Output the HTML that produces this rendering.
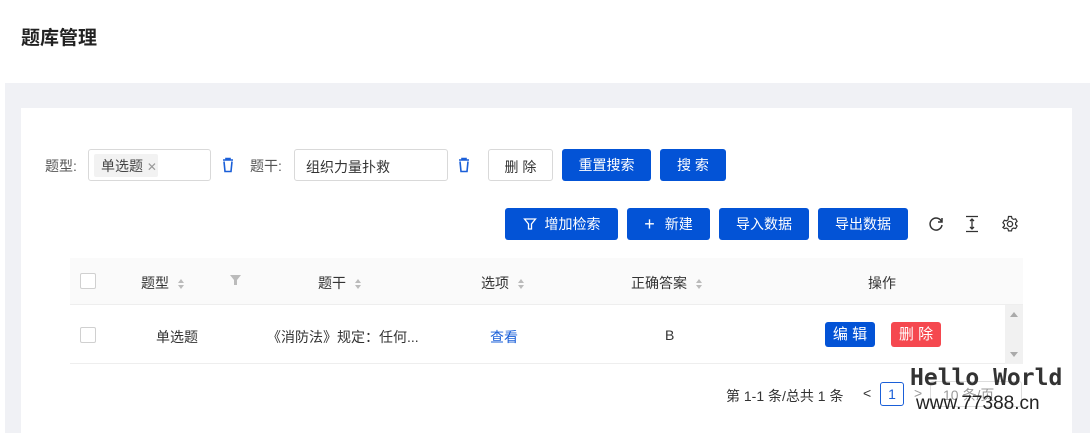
<!DOCTYPE html>
<html><head><meta charset="utf-8"><style>
*{box-sizing:border-box;margin:0;padding:0}
body{width:1090px;height:433px;overflow:hidden;background:#fff;font-family:"Liberation Sans","Noto Sans CJK SC",sans-serif;font-size:14px;color:#333;position:relative}
.a{position:absolute}
.gray{left:5px;top:83px;width:1085px;height:350px;background:#f0f1f5}
.card{left:21px;top:108px;width:1051px;height:325px;background:#fff}
.inp{border:1px solid #d9d9d9;border-radius:3px;height:32px;background:#fff}
.btn{background:#0353d6;color:#fff;border-radius:3px;height:32px;display:flex;align-items:center;justify-content:center;font-size:14px}
.hd{top:258px;left:70px;width:953px;height:47px;background:#fafafa;border-bottom:1px solid #eee}
.cb{width:16px;height:16px;border:1px solid #d0d0d0;border-radius:2px;background:#fff}
.sort{display:inline-block;width:8px;vertical-align:middle;margin-left:8px}
.txt{font-size:14px;color:#333;white-space:nowrap}
</style></head><body>
<div class="a txt" style="left:21px;top:23px;font-size:19px;font-weight:bold;color:#222">题库管理</div>
<div class="a gray"></div>
<div class="a card"></div>

<div class="a txt" style="left:45px;top:156px;color:#555">题型:</div>
<div class="a inp" style="left:88px;top:149px;width:123px"></div>
<div class="a" style="left:94px;top:154px;width:64px;height:23px;background:#f2f2f2;border-radius:2px;font-size:14px;padding:2px 0 0 7px;color:#444">单选题 <span style="color:#999;font-size:12px">✕</span></div>
<svg class="a" style="left:221px;top:157px" width="14" height="16" viewBox="0 0 14 16"><path d="M2 3h10M5 3V1.5h4V3M3 4.5l1 10h6l1-10" fill="none" stroke="#1a5fd8" stroke-width="1.6"/></svg>
<div class="a txt" style="left:250px;top:156px;color:#555">题干:</div>
<div class="a inp" style="left:294px;top:149px;width:154px;padding:7px 11px" ><span class="txt">组织力量扑救</span></div>
<svg class="a" style="left:457px;top:157px" width="14" height="16" viewBox="0 0 14 16"><path d="M2 3h10M5 3V1.5h4V3M3 4.5l1 10h6l1-10" fill="none" stroke="#1a5fd8" stroke-width="1.6"/></svg>
<div class="a inp" style="left:488px;top:149px;width:65px;text-align:center;padding-top:7px"><span class="txt">删 除</span></div>
<div class="a btn" style="left:562px;top:149px;width:89px">重置搜索</div>
<div class="a btn" style="left:660px;top:149px;width:66px">搜 索</div>

<div class="a btn" style="left:505px;top:208px;width:113px"><svg width="14" height="14" viewBox="0 0 14 14" style="margin-right:8px"><path d="M1.5 2h11l-4 5v5h-3V7z" fill="none" stroke="#fff" stroke-width="1.3"/></svg>增加检索</div>
<div class="a btn" style="left:627px;top:208px;width:83px"><span style="font-size:18px;font-weight:300;margin-right:10px">+</span>新建</div>
<div class="a btn" style="left:719px;top:208px;width:90px">导入数据</div>
<div class="a btn" style="left:818px;top:208px;width:90px">导出数据</div>
<svg class="a" style="left:928px;top:216px" width="16" height="16" viewBox="0 0 16 16"><path d="M13.5 5.5A6 6 0 1 0 14 9" fill="none" stroke="#333" stroke-width="1.5"/><path d="M14 2v4h-4" fill="none" stroke="#333" stroke-width="1.5"/></svg>
<svg class="a" style="left:964px;top:215px" width="16" height="18" viewBox="0 0 16 18"><path d="M2 1.5h12M2 16.5h12M8 4v10M6 6l2-2 2 2M6 12l2 2 2-2" fill="none" stroke="#333" stroke-width="1.3"/></svg>
<svg class="a" style="left:1001px;top:215px" width="18" height="18" viewBox="0 0 18 18"><circle cx="9" cy="9" r="2.6" fill="none" stroke="#333" stroke-width="1.3"/><path d="M7.5 1.5h3l.5 2 1.6.9 2-.6 1.5 2.6-1.5 1.4v1.8l1.5 1.4-1.5 2.6-2-.6-1.6.9-.5 2h-3l-.5-2-1.6-.9-2 .6L1.9 12.4l1.5-1.4V9.2L1.9 7.8l1.5-2.6 2 .6 1.6-.9z" fill="none" stroke="#333" stroke-width="1.2"/></svg>

<div class="a hd"></div>
<div class="a cb" style="left:80px;top:273px"></div>
<div class="a txt" style="left:141px;top:273px">题型<svg class="sort" width="8" height="12" viewBox="0 0 8 12"><path d="M4 1l3 4H1zM4 11l3-4H1z" fill="#bbb"/></svg></div>
<svg class="a" style="left:230px;top:275px" width="11" height="10" viewBox="0 0 11 10"><path d="M0 0h11L7 5v5H4V5z" fill="#bbb"/></svg>
<div class="a txt" style="left:318px;top:273px">题干<svg class="sort" width="8" height="12" viewBox="0 0 8 12"><path d="M4 1l3 4H1zM4 11l3-4H1z" fill="#bbb"/></svg></div>
<div class="a txt" style="left:481px;top:273px">选项<svg class="sort" width="8" height="12" viewBox="0 0 8 12"><path d="M4 1l3 4H1zM4 11l3-4H1z" fill="#bbb"/></svg></div>
<div class="a txt" style="left:631px;top:273px">正确答案<svg class="sort" width="8" height="12" viewBox="0 0 8 12"><path d="M4 1l3 4H1zM4 11l3-4H1z" fill="#bbb"/></svg></div>
<div class="a txt" style="left:868px;top:273px">操作</div>

<div class="a" style="left:1005px;top:305px;width:18px;height:59px;background:#f1f1f1"></div>
<svg class="a" style="left:1010px;top:312px" width="8" height="6"><path d="M4 0l4 5H0z" fill="#aaa"/></svg>
<svg class="a" style="left:1010px;top:352px" width="8" height="6"><path d="M4 5l4-5H0z" fill="#aaa"/></svg>
<div class="a" style="left:70px;top:363px;width:935px;height:1px;background:#eee"></div>
<div class="a cb" style="left:80px;top:327px"></div>
<div class="a txt" style="left:156px;top:327px">单选题</div>
<div class="a txt" style="left:267px;top:327px">《消防法》规定：任何...</div>
<div class="a txt" style="left:490px;top:327px;color:#1a5fd8">查看</div>
<div class="a txt" style="left:665px;top:327px">B</div>
<div class="a" style="left:825px;top:322px;width:50px;height:25px;background:#0353d6;color:#fff;border-radius:3px;text-align:center;line-height:25px;font-size:15px">编 辑</div>
<div class="a" style="left:891px;top:322px;width:50px;height:25px;background:#f5484f;color:#fff;border-radius:3px;text-align:center;line-height:25px;font-size:15px">删 除</div>

<div class="a txt" style="left:726px;top:386px">第 1-1 条/总共 1 条</div>
<div class="a txt" style="left:863px;top:385px">&lt;</div>
<div class="a" style="left:880px;top:382px;width:24px;height:24px;border:1px solid #1a5fd8;border-radius:3px;color:#1a5fd8;text-align:center;line-height:22px;font-size:14px">1</div>
<div class="a txt" style="left:914px;top:385px;color:#999">&gt;</div>
<div class="a" style="left:930px;top:381px;width:92px;height:26px;border:1px solid #ddd;border-radius:3px;color:#999;padding:3px 12px;font-size:14px">10 条/页</div>
<div class="a" style="left:910px;top:365px;font-family:'DejaVu Sans Mono',monospace;font-weight:bold;font-size:23px;color:#333;letter-spacing:0px">Hello World</div>
<div class="a" style="left:916px;top:393px;font-family:'Liberation Sans',sans-serif;font-size:19px;color:#222">www.77388.cn</div>
</body></html>
